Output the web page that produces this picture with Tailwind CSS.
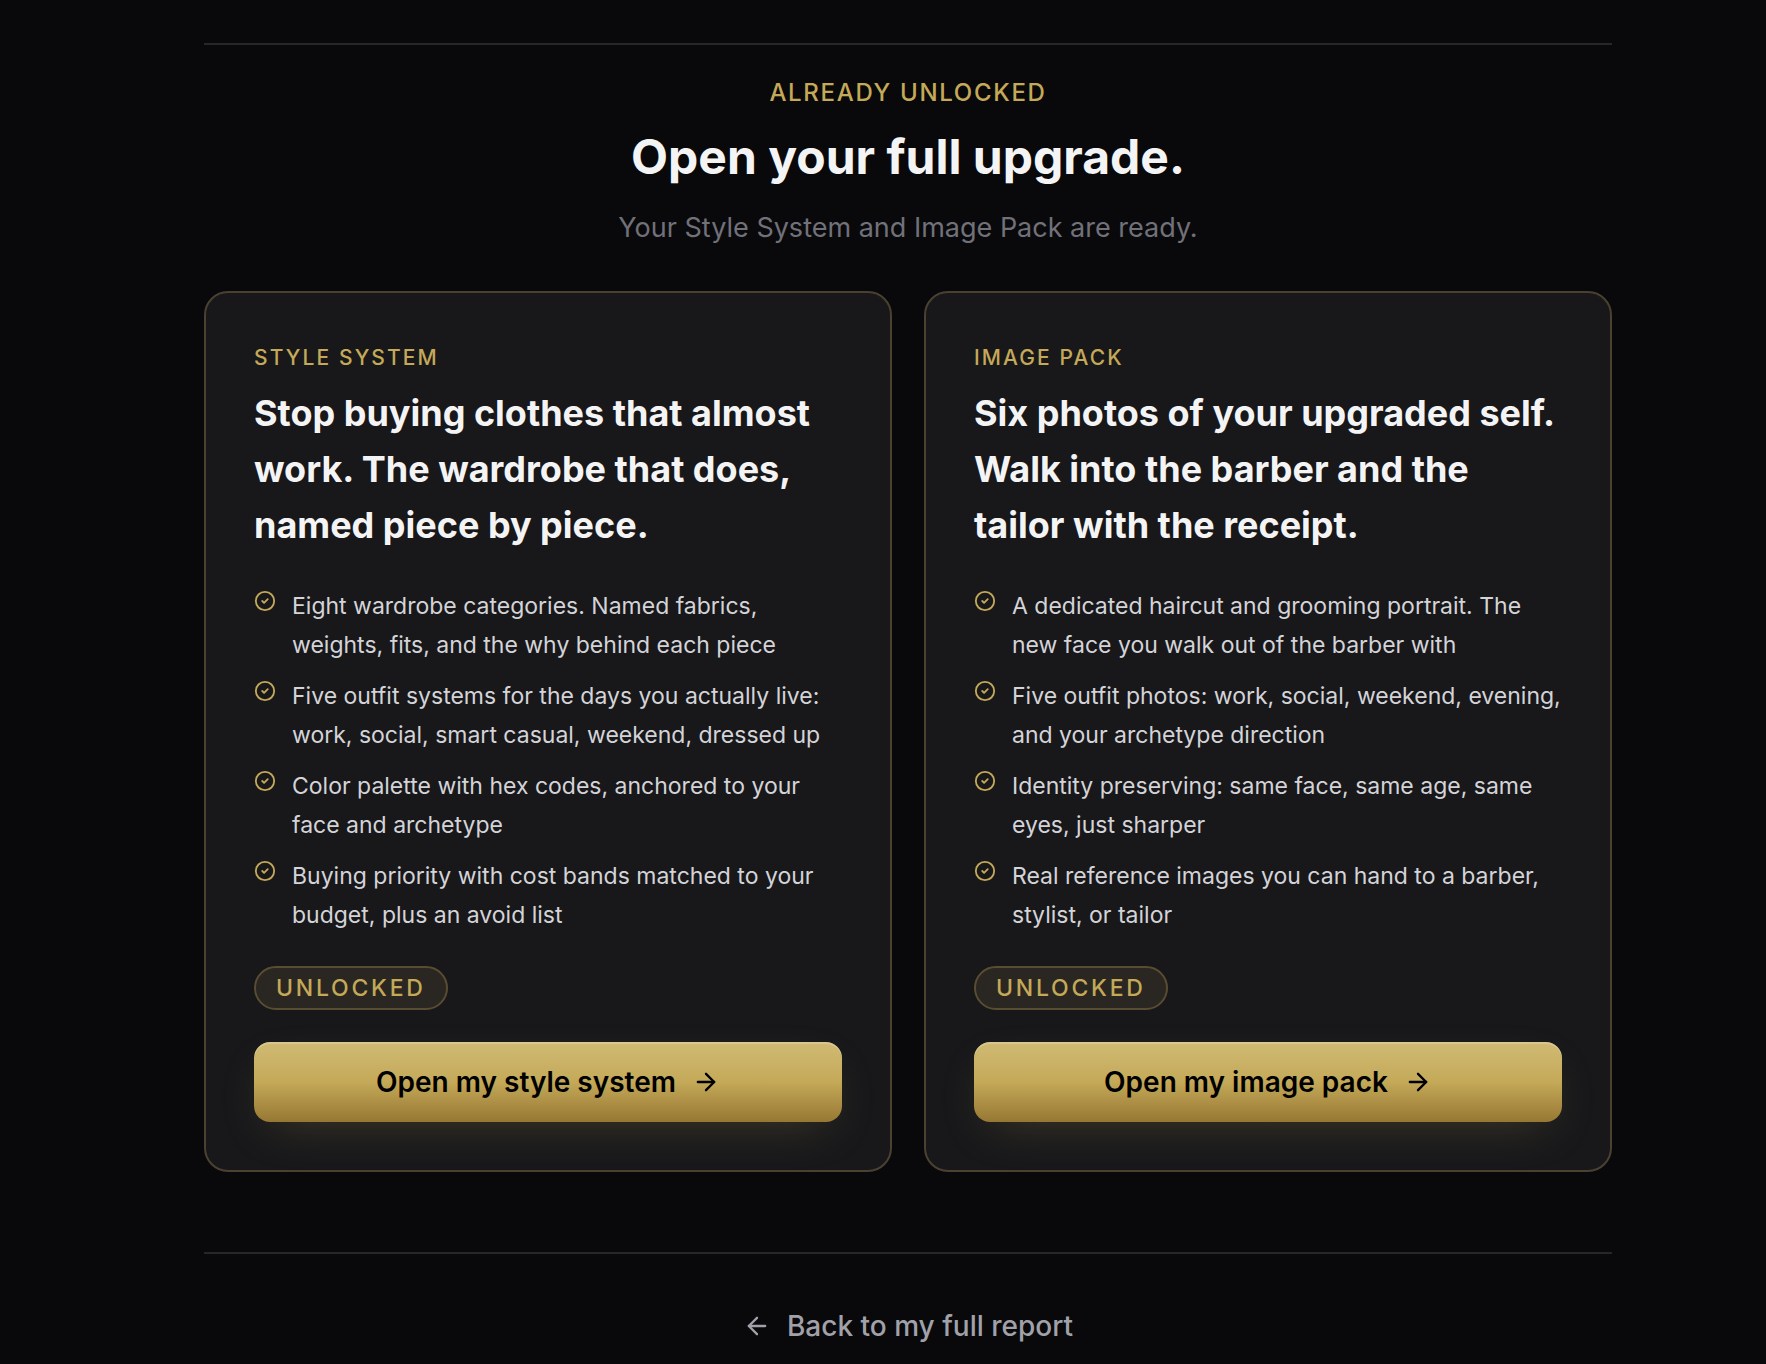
<!DOCTYPE html>
<html lang="en">
<head>
<meta charset="utf-8">
<meta name="viewport" content="width=device-width, initial-scale=1">
<title>Open your full upgrade</title>
<script src="https://cdn.jsdelivr.net/npm/@tailwindcss/browser@4"></script>
</head>
<body class="min-h-screen overflow-x-hidden bg-[#09090b] font-['Inter',sans-serif] text-[#f4f4f5] antialiased">
<svg class="hidden" aria-hidden="true">
  <symbol id="check" viewBox="0 0 24 24" fill="none" stroke="currentColor" stroke-width="2" stroke-linecap="round" stroke-linejoin="round"><circle cx="12" cy="12" r="10"/><path d="m9 12 2 2 4-4"/></symbol>
  <symbol id="arrow-right" viewBox="0 0 24 24" fill="none" stroke="currentColor" stroke-width="2" stroke-linecap="round" stroke-linejoin="round"><path d="M5 12h14"/><path d="m12 5 7 7-7 7"/></symbol>
  <symbol id="arrow-left" viewBox="0 0 24 24" fill="none" stroke="currentColor" stroke-width="2" stroke-linecap="round" stroke-linejoin="round"><path d="m12 19-7-7 7-7"/><path d="M19 12H5"/></symbol>
</svg>
<main class="pt-[43px] pr-[154px] pb-4 pl-[204px]">
  <section class="border-t-2 border-[#27272a] pt-7">
    <header class="text-center">
      <p class="text-2xl leading-10 font-medium tracking-[0.07em] text-[#c4a958] uppercase">Already unlocked</p>
      <h2 class="mt-3 text-5xl leading-16 font-bold">Open your full upgrade.</h2>
      <p class="mt-4 text-[27px] leading-[46px] text-[#71717a]">Your Style System and Image Pack are ready.</p>
    </header>

    <div class="mt-10 grid grid-cols-2 gap-8">
      <article class="flex flex-col rounded-3xl border-2 border-[#4b4130] bg-[#18181b] p-12">
        <p class="text-[21px] leading-[34px] font-medium tracking-[0.1em] text-[#c4a958] uppercase">Style System</p>
        <h3 class="mt-[10px] text-4xl leading-14 font-bold">Stop buying clothes that almost work. The wardrobe that does, named piece by piece.</h3>
        <ul class="mt-[34px] flex flex-col gap-3 text-[23px] leading-[39px] text-[#d4d4d8]">
          <li class="flex gap-4"><svg class="mt-[3px] size-[22px] shrink-0 text-[#c4a958]" aria-hidden="true"><use href="#check"/></svg><span>Eight wardrobe categories. Named fabrics, weights, fits, and the why behind each piece</span></li>
          <li class="flex gap-4"><svg class="mt-[3px] size-[22px] shrink-0 text-[#c4a958]" aria-hidden="true"><use href="#check"/></svg><span>Five outfit systems for the days you actually live: work, social, smart casual, weekend, dressed up</span></li>
          <li class="flex gap-4"><svg class="mt-[3px] size-[22px] shrink-0 text-[#c4a958]" aria-hidden="true"><use href="#check"/></svg><span>Color palette with hex codes, anchored to your face and archetype</span></li>
          <li class="flex gap-4"><svg class="mt-[3px] size-[22px] shrink-0 text-[#c4a958]" aria-hidden="true"><use href="#check"/></svg><span>Buying priority with cost bands matched to your budget, plus an avoid list</span></li>
        </ul>
        <p class="mt-[31px] self-start rounded-full border-2 border-[#594c31] bg-[#2a2621] px-5 text-[23px] leading-10 font-medium tracking-[0.12em] text-[#c4a958] uppercase">Unlocked</p>
        <button type="button" class="mt-8 flex h-20 items-center justify-center gap-4 rounded-2xl bg-linear-to-b from-[#d0ba74] via-[#c4a958] to-[#977833] text-[28px] font-semibold text-black shadow-[inset_0_2px_0_rgba(255,255,255,0.2),0_16px_48px_-16px_rgba(196,169,88,0.25)]">Open my style system<svg class="size-7" aria-hidden="true"><use href="#arrow-right"/></svg></button>
      </article>

      <article class="flex flex-col rounded-3xl border-2 border-[#4b4130] bg-[#18181b] p-12">
        <p class="text-[21px] leading-[34px] font-medium tracking-[0.1em] text-[#c4a958] uppercase">Image Pack</p>
        <h3 class="mt-[10px] text-4xl leading-14 font-bold">Six photos of your upgraded self. Walk into the barber and the tailor with the receipt.</h3>
        <ul class="mt-[34px] flex flex-col gap-3 text-[23px] leading-[39px] text-[#d4d4d8]">
          <li class="flex gap-4"><svg class="mt-[3px] size-[22px] shrink-0 text-[#c4a958]" aria-hidden="true"><use href="#check"/></svg><span>A dedicated haircut and grooming portrait. The new face you walk out of the barber with</span></li>
          <li class="flex gap-4"><svg class="mt-[3px] size-[22px] shrink-0 text-[#c4a958]" aria-hidden="true"><use href="#check"/></svg><span>Five outfit photos: work, social, weekend, evening, and your archetype direction</span></li>
          <li class="flex gap-4"><svg class="mt-[3px] size-[22px] shrink-0 text-[#c4a958]" aria-hidden="true"><use href="#check"/></svg><span>Identity preserving: same face, same age, same eyes, just sharper</span></li>
          <li class="flex gap-4"><svg class="mt-[3px] size-[22px] shrink-0 text-[#c4a958]" aria-hidden="true"><use href="#check"/></svg><span>Real reference images you can hand to a barber, stylist, or tailor</span></li>
        </ul>
        <p class="mt-[31px] self-start rounded-full border-2 border-[#594c31] bg-[#2a2621] px-5 text-[23px] leading-10 font-medium tracking-[0.12em] text-[#c4a958] uppercase">Unlocked</p>
        <button type="button" class="mt-8 flex h-20 items-center justify-center gap-4 rounded-2xl bg-linear-to-b from-[#d0ba74] via-[#c4a958] to-[#977833] text-[28px] font-semibold text-black shadow-[inset_0_2px_0_rgba(255,255,255,0.2),0_16px_48px_-16px_rgba(196,169,88,0.25)]">Open my image pack<svg class="size-7" aria-hidden="true"><use href="#arrow-right"/></svg></button>
      </article>
    </div>
  </section>

  <footer class="mt-20 flex justify-center border-t-2 border-[#27272a] pt-[52px]">
    <a href="#" class="flex items-center gap-4 text-[28px] leading-10 font-medium text-[#a1a1aa]"><svg class="size-7" aria-hidden="true"><use href="#arrow-left"/></svg>Back to my full report</a>
  </footer>
</main>
</body>
</html>
